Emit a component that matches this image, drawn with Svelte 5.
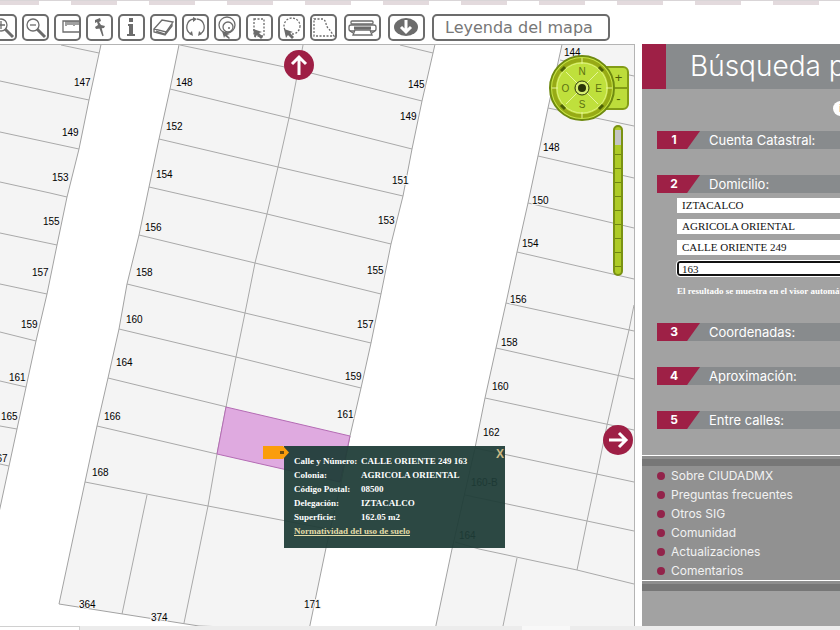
<script lang="ts">
  type Label = [string, number, number];

  const blocks = [
    'M-5 40H102L89 100L79 149L67 197L57 245L47 294L36 341L17 429L0 508L-5 530Z',
    'M180 40L170 89L159 139L149 187L139 235L127 284L119 329L108 378L97 426L85 482L59 604L199 626L309 630L326 548L341 483L350 436L361 388L371 343L381 294L391 244L403 196L412 149L422 101L436 40Z',
    'M563 40L548 108L538 156L528 203L517 252L506 303L496 348L485 398L475 448L452 549L435 630H640V40Z'
  ];

  const lots = [
    'M61 45L99 53M0 81L89 100M0 132L79 149M0 182L50 193L67 197M0 233L57 245M0 284L47 294M0 332L36 341M0 381L26 387M0 426L17 429M0 464L9 466',
    'M400 45L433 53M180 45L299 70L422 101M170 89L289 118L412 149M159 139L278 167L403 196M149 187L267 214L391 244M139 235L255 263L381 294M127 284L245 313L371 343M119 329L236 357L361 388M108 378L227 407M97 426L217 454M85 482L208 506L333 530',
    'M304 40L289 118L278 167L267 214L255 263L245 313L236 357L226 407L217 454L208 506L196 565L184 623M147 495L122 614',
    'M560 60L634 76M548 108L634 126M538 156L634 178M528 203L634 228M517 252L634 279M506 303L634 331M496 348L634 379M485 398L634 430M475 448L634 482M465 495L634 531M455 542L479 549L577 570L634 584',
    'M634 305L629 330L618 377L607 425L597 474L587 521L577 570M517 558L503 626'
  ];

  const labels: Label[] = [
    ['147', 74, 86], ['149', 62, 136], ['153', 52, 181], ['155', 43, 225],
    ['157', 32, 276], ['159', 21, 328], ['161', 9, 381], ['165', 1, 420], ['167', -9, 462],
    ['148', 176, 86], ['152', 166, 130], ['154', 156, 178], ['156', 145, 231],
    ['158', 136, 276], ['160', 126, 323], ['164', 116, 366], ['166', 104, 420],
    ['168', 92, 476], ['364', 79, 608], ['374', 151, 621], ['171', 304, 608],
    ['145', 408, 88], ['149', 400, 120], ['151', 392, 184], ['153', 378, 224],
    ['155', 367, 274], ['157', 357, 328], ['159', 345, 380], ['161', 337, 418],
    ['144', 564, 56], ['148', 543, 151], ['150', 532, 204], ['154', 522, 247],
    ['156', 510, 303], ['158', 501, 346], ['160', 492, 390], ['162', 483, 436],
    ['160-B', 471, 486], ['164', 459, 539]
  ];

  const details = [
    ['Calle y Número:', 'CALLE ORIENTE 249 163'],
    ['Colonia:', 'AGRICOLA ORIENTAL'],
    ['Código Postal:', '08500'],
    ['Delegación:', 'IZTACALCO'],
    ['Superficie:', '162.05 m2']
  ];

  const sections = ['Cuenta Catastral:', 'Domicilio:', 'Coordenadas:', 'Aproximación:', 'Entre calles:'];

  const fields = [
    { name: 'Delegación', value: 'IZTACALCO' },
    { name: 'Colonia', value: 'AGRICOLA ORIENTAL' },
    { name: 'Calle', value: 'CALLE ORIENTE 249' },
    { name: 'Número', value: '163' }
  ];

  const links = ['Sobre CIUDADMX', 'Preguntas frecuentes', 'Otros SIG', 'Comunidad', 'Actualizaciones', 'Comentarios'];

  let open = $state(1);
  let showPopup = $state(true);
  let zoom = $state(0);
</script>

<div class="page">
  <div class="strip"></div>

  <header class="toolbar">
    <div class="tools">
      <button class="tool" type="button" aria-label="Acercar">
        <svg viewBox="0 0 23 23"><circle cx="9" cy="9" r="6" /><path d="M9 5v8M5 9h8" /><path class="thick" d="M13 13l8 8" /></svg>
      </button>
      <button class="tool" type="button" aria-label="Alejar">
        <svg viewBox="0 0 23 23"><circle cx="9" cy="9" r="6" /><path d="M6 9h6" /><path class="thick" d="M13 13l8 8" /></svg>
      </button>
      <button class="tool" type="button" aria-label="Medir">
        <svg viewBox="0 0 23 23"><path d="M23 5H7v11h16M10 5v5M12 5v4M14 5v4M16 5v4M18 5v5M20 5v4M22 5v4" /></svg>
      </button>
      <button class="tool" type="button" aria-label="Marcar">
        <svg viewBox="0 0 23 23"><path class="solid" d="M7 4l5-2 1 3-2 1 2 3 4 1-1 2-8 1-1-2 3-2-1-3-2 1z" /><path d="M12 12l3 8M13 12l2 8" /></svg>
      </button>
      <button class="tool" type="button" aria-label="Información">
        <svg viewBox="0 0 23 23"><path class="solid" d="M9 2h4v4H9zM8 8h5v10h2v2H7v-2h2v-8H8z" /></svg>
      </button>
      <button class="tool" type="button" aria-label="Borrar">
        <svg viewBox="0 0 23 23"><path d="M2 13l8-9 11 2-7 10zM2 13v3l11 3 1-3M13 19l7-9V6M4 15l9 3" /></svg>
      </button>
      <button class="tool" type="button" aria-label="Actualizar">
        <svg viewBox="0 0 23 23"><path d="M10 3a8 8 0 0 0-3 15M13 3a8 8 0 0 1 3 15" /><path class="solid" d="M9 1l4 2-4 3zM14 20l1-5 3 3zM9 20l-1-5-3 3z" /></svg>
      </button>
      <button class="tool" type="button" aria-label="Área de influencia">
        <svg viewBox="0 0 23 23"><circle cx="11" cy="9" r="8" /><circle cx="12" cy="11" r="5" /><circle class="solid" cx="13" cy="12" r="1" /><path class="solid" d="M6 15l8 3-3 1 3 3-1 1-4-3-1 2z" /></svg>
      </button>
      <button class="tool" type="button" aria-label="Seleccionar por rectángulo">
        <svg viewBox="0 0 23 23"><path class="dash" d="M6 3h10v17H6z" /><path class="solid" d="M5 13l9 3-3 1 4 4-2 2-4-4-2 3z" /></svg>
      </button>
      <button class="tool" type="button" aria-label="Seleccionar por círculo">
        <svg viewBox="0 0 23 23"><circle class="dash" cx="12" cy="10" r="8" /><path class="solid" d="M4 13l9 3-3 1 4 4-2 2-4-4-2 3z" /></svg>
      </button>
      <button class="tool" type="button" aria-label="Seleccionar por polígono">
        <svg viewBox="0 0 23 23"><path class="dash" d="M2 3h9c4 2 2 7 6 10l5 7H2z" /></svg>
      </button>
    </div>
    <button class="tool wide" type="button" aria-label="Imprimir">
      <svg viewBox="0 0 33 23"><rect x="5" y="5" width="22" height="3" rx="1" /><rect x="3" y="9" width="27" height="6" rx="2" /><path class="thick" d="M8 12h17" /><path d="M4 15l3 2M29 15l-3 2" /><path class="paper" d="M9 14h15l2 5H7z" /></svg>
    </button>
    <button class="tool wide" type="button" aria-label="Descargar">
      <svg viewBox="0 0 33 23"><ellipse class="solid" cx="16" cy="11" rx="12" ry="9" /><path class="down" d="M16 4v11M11 11l5 5 5-5" /></svg>
    </button>
    <button class="legend" type="button">Leyenda del mapa</button>
  </header>

  <main class="content">
    <section class="map" aria-label="Mapa">
      <svg class="cadastre" viewBox="0 45 634 581" preserveAspectRatio="xMinYMin slice">
        {#each blocks as d}
          <path class="block" {d} />
        {/each}
        {#each lots as d}
          <path class="lot" {d} />
        {/each}
        <path class="selected" d="M226 407L350 436L340 482L217 454Z" />
        {#each labels as [text, x, y]}
          <text {x} {y}>{text}</text>
        {/each}
      </svg>

      <button class="pan north" type="button" aria-label="Mover al norte">
        <svg viewBox="0 0 30 30"><path d="M15 25V8M8 14l7-7 7 7" /></svg>
      </button>
      <button class="pan east" type="button" aria-label="Mover al este">
        <svg viewBox="0 0 30 30"><path d="M6 15h17M16 8l7 7-7 7" /></svg>
      </button>

      <div class="steps">
        <button type="button" onclick={() => (zoom = Math.max(0, zoom - 1))}>+</button>
        <button type="button" onclick={() => (zoom = Math.min(9, zoom + 1))}>-</button>
      </div>
      <div class="compass">
        <svg viewBox="0 0 66 66" aria-hidden="true">
          <circle cx="33" cy="33" r="32" fill="#c9e645" stroke="#6f8a10" stroke-width="2" />
          <circle cx="33" cy="33" r="28" fill="none" stroke="#97aa16" stroke-width="4" />
          <circle cx="33" cy="33" r="25" fill="#bfe03c" stroke="#dcf07a" />
          <path d="M33 3v6M33 57v6M3 33h6M57 33h6M17 17l32 32M49 17L17 49" stroke="#e6f59a" />
          <path d="M12 16l4-4M50 12l4 4M12 50l4 4M50 54l4-4" stroke="#4c6006" stroke-width="3" />
          <circle cx="33" cy="33" r="7" fill="#d8ef70" stroke="#2a3408" />
          <circle cx="33" cy="33" r="4" fill="#2a3408" />
        </svg>
        <button class="n" type="button">N</button>
        <button class="w" type="button">O</button>
        <button class="e" type="button">E</button>
        <button class="s" type="button">S</button>
      </div>
      <input class="zoom" type="range" min="0" max="9" bind:value={zoom} aria-label="Nivel de acercamiento" />

      {#if showPopup}
        <div class="popup">
          <svg class="tag" viewBox="0 0 26 13" aria-hidden="true">
            <path d="M0 0h20l6 6.500-6 6.500H0z" fill="#fb9d0c" />
            <rect x="17" y="5" width="4" height="3" fill="#6b4a10" />
          </svg>
          <button class="close" type="button" onclick={() => (showPopup = false)}>X</button>
          <dl>
            {#each details as [term, value]}
              <dt>{term}</dt>
              <dd>{value}</dd>
            {/each}
          </dl>
          <a href="#normatividad">Normatividad del uso de suelo</a>
        </div>
      {/if}
    </section>

    <aside class="panel">
      <h1>Búsqueda por</h1>
      <div class="help"><button type="button" aria-label="Ayuda">i</button></div>

      {#each sections as title, i}
        <section class="group">
          <button class="bar" type="button" onclick={() => (open = i)}>
            <span class="number">{i + 1}</span>
            <span>{title}</span>
          </button>
          {#if i === 1 && open === 1}
            <div class="fields">
              {#each fields as field, n}
                <input type="text" class:active={n === 3} aria-label={field.name} bind:value={field.value} />
              {/each}
            </div>
            <p class="note">El resultado se muestra en el visor automáticamente</p>
          {/if}
        </section>
      {/each}

      <nav class="links">
        <ul>
          {#each links as link}
            <li><a href="#menu">{link}</a></li>
          {/each}
        </ul>
      </nav>
      <div class="band"></div>
    </aside>
  </main>

  <footer class="status"><span class="left"></span><span class="right"></span></footer>
</div>

<style>
  :global(body) {
    margin: 0;
    background: #fff;
  }

  .page {
    display: flex;
    flex-direction: column;
    min-height: 100vh;
    overflow: hidden;
    font-family: 'Liberation Sans', sans-serif;
  }

  button {
    padding: 0;
    border: none;
    background: none;
    font: inherit;
    color: inherit;
    cursor: pointer;
  }

  .strip {
    height: 4px;
    border-top: 1px solid #d9d5d7;
    background: repeating-linear-gradient(90deg, #e3dadd 0 46px, #fff 46px 78px) -7px 0;
    background-size: calc(100% + 78px) 100%;
  }

  .toolbar {
    display: flex;
    gap: 7px;
    padding: 9px 0 3px;
    height: 27px;
  }

  .tools {
    display: flex;
    gap: 5px;
    margin-left: -10px;
  }

  .tool,
  .legend {
    box-sizing: border-box;
    flex: none;
    border: 2px solid #6c6c6c;
    border-radius: 5px;
    background: #fff;
  }

  .tool {
    width: 27px;
    height: 27px;
  }

  .wide {
    width: 37px;
  }

  .tool svg {
    display: block;
    width: 100%;
    height: 100%;
    fill: none;
    stroke: #6c6c6c;
    stroke-width: 1.3;
  }

  .thick {
    stroke-width: 3;
  }

  .tool .solid {
    fill: #6c6c6c;
    stroke: none;
  }

  .dash {
    stroke-dasharray: 2 1.5;
  }

  .paper {
    fill: #fff;
  }

  .down {
    stroke: #fff;
    stroke-width: 3;
  }

  .legend {
    height: 27px;
    padding: 0 15px 0 11px;
    font-family: 'DejaVu Sans', sans-serif;
    font-size: 16px;
    line-height: 20px;
    color: #777;
  }

  .content {
    flex: 1;
    display: grid;
    grid-template-columns: 635fr 198fr;
    column-gap: 7px;
  }

  .map {
    position: relative;
    overflow: hidden;
    border-top: 1px solid #b4b4b4;
    border-right: 1px solid #b4b4b4;
    background: #fff;
  }

  .cadastre {
    position: absolute;
    width: 100%;
    height: 100%;
    font-size: 10px;
  }

  .cadastre text {
    stroke: #f4f4f4;
    stroke-width: 2px;
    paint-order: stroke;
  }

  .block {
    fill: #f4f4f4;
    stroke: #a2a2a2;
  }

  .lot {
    fill: none;
    stroke: #a9a9a9;
  }

  .selected {
    fill: #dfaae0;
    stroke: #b46cb4;
  }

  .pan {
    position: absolute;
    width: 30px;
    height: 30px;
    border-radius: 50%;
    background: #9e1f45;
  }

  .pan svg {
    display: block;
    fill: none;
    stroke: #fff;
    stroke-width: 3;
  }

  .north {
    left: 284px;
    top: 5px;
  }

  .east {
    right: 1px;
    top: 380px;
  }

  .compass {
    position: absolute;
    top: 10px;
    right: 19px;
    display: grid;
    grid-template: 'a n b' 17px 'w c e' 16px 'd s f' 17px / 17px 16px 17px;
    padding: 8px;
    font-size: 10px;
    color: #5d7312;
  }

  .compass svg {
    position: absolute;
    inset: 0;
  }

  .compass button {
    position: relative;
  }

  .n { grid-area: n; }
  .w { grid-area: w; }
  .e { grid-area: e; }
  .s { grid-area: s; }

  .steps {
    position: absolute;
    top: 21px;
    right: 5px;
    display: flex;
    flex-direction: column;
    width: 26px;
    border: 2px solid #839c17;
    border-radius: 6px;
    background: #bddd3b;
    font-size: 13px;
    line-height: 19px;
    color: #4c6006;
  }

  .steps button {
    padding-left: 9px;
  }

  .steps button + button {
    border-top: 2px solid #839c17;
  }

  .zoom {
    position: absolute;
    top: 80px;
    right: 11px;
    box-sizing: border-box;
    width: 10px;
    height: 151px;
    margin: 0;
    padding: 3px 0;
    appearance: none;
    writing-mode: vertical-lr;
    border: 2px solid #7a9212;
    border-radius: 5px;
    background: repeating-linear-gradient(#aecb26 0 13px, #6f8610 13px 14px);
  }

  .zoom::-webkit-slider-thumb {
    appearance: none;
    width: 6px;
    height: 15px;
    background: #c4c4c4;
  }

  .popup {
    position: absolute;
    left: 284px;
    top: 401px;
    box-sizing: border-box;
    width: 221px;
    padding: 8px 10px 10px;
    background: rgba(31, 61, 55, 0.94);
    font: bold 9px/14px 'Liberation Serif', serif;
    color: #fff;
  }

  .popup dl {
    display: grid;
    grid-template-columns: 67px 1fr;
    margin: 0;
  }

  .popup dd {
    margin: 0;
  }

  .popup a {
    color: #e3dba8;
  }

  .close {
    position: absolute;
    top: 1px;
    right: 1px;
    font: bold 12px/14px 'Liberation Sans', sans-serif;
    color: #c9b983;
  }

  .tag {
    position: absolute;
    left: -21px;
    top: 0;
    width: 26px;
    height: 13px;
  }

  .panel {
    min-width: 0;
    overflow: hidden;
    background: #a2a2a2;
    font-family: Inter, sans-serif;
    white-space: nowrap;
    color: #fff;
  }

  h1 {
    margin: 0;
    padding-left: 24px;
    border-left: 24px solid #9e2046;
    background: #888b8d;
    font-size: 28px;
    font-weight: 300;
    line-height: 45px;
  }

  .help {
    display: flex;
    justify-content: flex-end;
    height: 30px;
    padding-top: 12px;
    margin-right: -8px;
  }

  .help button {
    width: 15px;
    height: 15px;
    border-radius: 50%;
    background: #fff;
    font: bold 11px/15px 'Liberation Sans', sans-serif;
    color: #777;
  }

  .group {
    padding: 0 0 26px 15px;
  }

  .bar {
    display: flex;
    gap: 9px;
    width: 100%;
    background: #888b8d;
    font-size: 13px;
    line-height: 18px;
  }

  .number {
    box-sizing: border-box;
    width: 43px;
    padding-right: 9px;
    background: #9e2046;
    clip-path: polygon(0 0, 100% 0, 70% 100%, 0 100%);
    font-size: 12px;
    font-weight: 700;
  }

  .fields {
    display: flex;
    flex-direction: column;
    gap: 6px;
    padding: 5px 0 0 20px;
    margin-right: -8px;
  }

  .fields input {
    box-sizing: border-box;
    height: 15px;
    padding: 0 5px;
    border: none;
    background: #fff;
    font: 11px/15px 'Liberation Serif', serif;
    color: #111;
  }

  .fields .active {
    padding: 0 3px;
    border: 2px solid #111;
    border-radius: 3px;
    outline: 1px solid #fff;
    line-height: 11px;
  }

  .note {
    margin: 9px 0 0 20px;
    font: bold 9px/12px 'Liberation Serif', serif;
  }

  .links {
    border-top: 1px solid #fff;
    border-bottom: 1px solid #fff;
    background: #919191;
    font-size: 12px;
    line-height: 19px;
  }

  .links::before,
  .band {
    content: '';
    display: block;
    height: 7px;
    border-top: 3px solid #8e8e8e;
    background: #777;
  }

  .links ul {
    margin: 0;
    padding: 0 0 0 15px;
    list-style: none;
  }

  .links li {
    display: flex;
    align-items: center;
    gap: 6px;
  }

  .links li::before {
    content: '';
    width: 8px;
    height: 8px;
    border-radius: 50%;
    background: #92234a;
  }

  .links a {
    color: #f2f2f2;
    text-decoration: none;
  }

  .status {
    display: flex;
    justify-content: space-between;
    height: 4px;
    background: #ececec;
  }

  .left {
    width: 79px;
    border-top: 1px solid #d0d0d0;
    border-right: 1px solid #d0d0d0;
    background: #fff;
  }

  .right {
    width: 48px;
    margin-right: 270px;
    background: #f8f8f8;
  }
</style>
